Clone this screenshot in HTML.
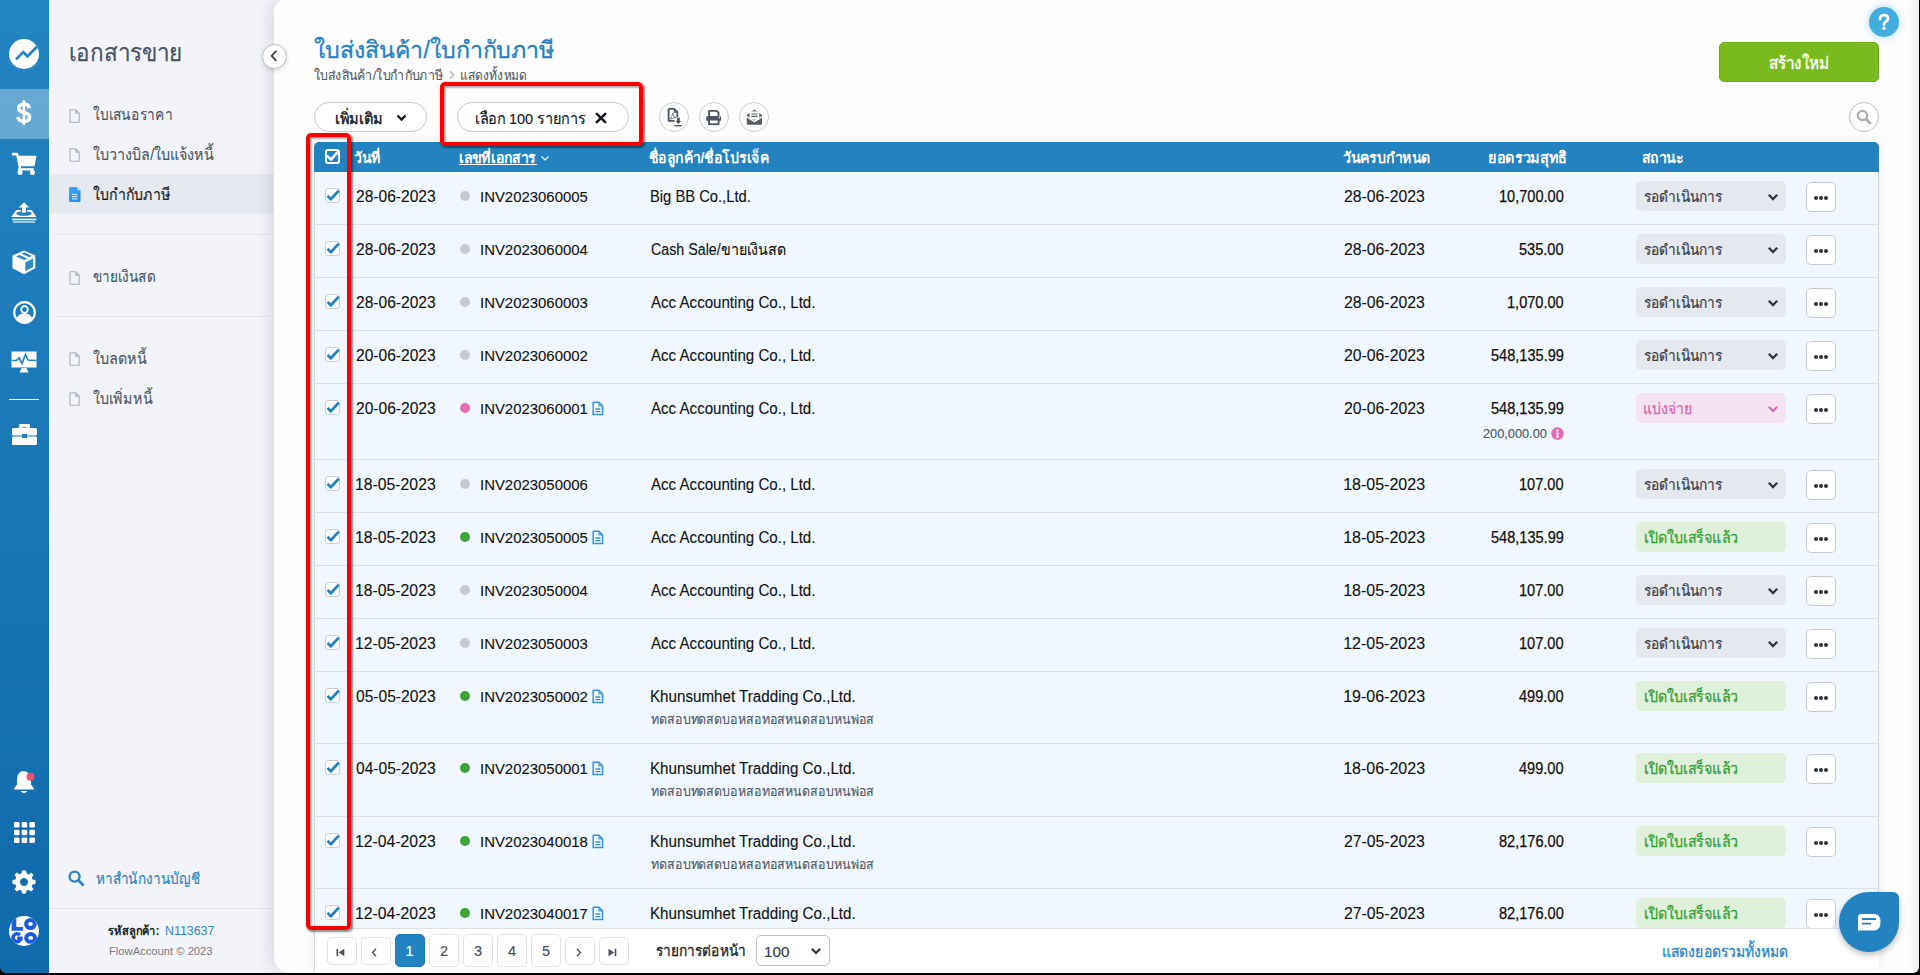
<!DOCTYPE html>
<html><head><meta charset="utf-8">
<style>
*{box-sizing:border-box;margin:0;padding:0}
html,body{width:1920px;height:975px;overflow:hidden;background:#000;font-family:"Liberation Sans",sans-serif;color:#1a1a1a}
.abs{position:absolute}
#rail{position:absolute;left:0;top:0;width:49px;height:973px;background:linear-gradient(#2384c2,#0f6aab);border-bottom-left-radius:6px}
#rail .act{position:absolute;left:0;top:89px;width:49px;height:50px;background:rgba(255,255,255,.32)}
#side{position:absolute;left:49px;top:0;width:240px;height:973px;background:#f3f4f9}
#main{position:absolute;left:274px;top:0;width:1645px;height:973px;background:#fdfdfe;border-radius:10px 0 6px 16px;box-shadow:-4px 0 14px rgba(80,90,130,.16)}
.t{position:absolute;white-space:nowrap;line-height:1}
.menu{font-size:14.2px;color:#4c5461}
.doc{position:absolute;width:11px;height:13px}
.row{position:absolute;left:314px;width:1565px;background:#f0f7fe;border-bottom:1px solid #dcdfe7;border-left:1px solid #d3d7e0;border-right:1px solid #cfd3dc}
.cb{position:absolute;left:325px;width:15px;height:15px;background:#fff;border:1px solid #c9ced8;border-radius:3px}
.cb svg{position:absolute;left:0;top:-1px}
.dt{font-size:15.5px;color:#111;letter-spacing:.1px}
.inv{font-size:14.8px;color:#111}
.dot{position:absolute;left:460px;width:10px;height:10px;border-radius:50%;background:#c7c9d1}
.cus{font-size:15px;color:#111}
.amt{font-size:14.8px;color:#111;text-align:right}
.st{position:absolute;left:1636px;width:150px;height:30px;border-radius:5px;background:#e5e9ef}
.st .t{left:8px;top:8px;font-size:14px;color:#3e4552}
.st svg{position:absolute;left:131px;top:11px}
.more{position:absolute;left:1806px;width:30px;height:30px;background:#fff;border:1px solid #c5c9d3;border-radius:5px}
.more i{position:absolute;top:13px;width:4.2px;height:4.2px;border-radius:50%;background:#2a303c}
.hd{font-size:14.2px;color:#fff;font-weight:bold}
.pg{position:absolute;width:30px;background:#fff;border:1px solid #dfe2e8;border-radius:5px;color:#4a5260;font-size:18px;text-align:center}
</style></head><body>

<!-- left rail -->
<div id="rail">
  <div class="act"></div>
  <svg class="abs" style="left:9px;top:39px" width="30" height="30" viewBox="0 0 30 30"><defs><clipPath id="c1"><circle cx="15" cy="15" r="15"/></clipPath></defs><circle cx="15" cy="15" r="15" fill="#fff"/><path clip-path="url(#c1)" d="M7.7 19.6 L14.3 13.1 L18.4 17.3 L30 5.8" stroke="#2384c2" stroke-width="2.7" fill="none" stroke-linecap="round" stroke-linejoin="miter"/></svg>
  <svg class="abs" style="left:16px;top:100px" width="16" height="25" viewBox="0 0 16 25"><path d="M13.3 8.2 C13 5.6 11 4.3 7.9 4.3 C4.6 4.3 2.6 6 2.6 8.3 C2.6 10.9 4.8 11.8 7.9 12.5 C11.3 13.3 13.6 14.4 13.6 17.2 C13.6 19.8 11.3 21.3 7.9 21.3 C4.4 21.3 2.3 19.6 2 16.9" fill="none" stroke="#fff" stroke-width="3.5"/><path d="M7.9 0.3 V24.7" stroke="#fff" stroke-width="2.6"/></svg>
  <svg class="abs" style="left:11px;top:152px" width="27" height="24" viewBox="0 0 27 24"><rect x="0.8" y="0.7" width="6.2" height="2.9" rx="1.3" fill="#fff"/><path d="M5 1.5 L7.3 1.5 L10.3 17.2 L7.9 17.2 Z" fill="#fff"/><path d="M6.8 3.7 H25.6 L23.4 14.2 H8.7 Z" fill="#fff"/><rect x="7" y="16.2" width="15.8" height="2.3" fill="#fff"/><circle cx="9" cy="20.5" r="2.5" fill="#fff"/><circle cx="21.4" cy="20.5" r="2.5" fill="#fff"/></svg>
  <svg class="abs" style="left:8px;top:196px" width="32" height="30" viewBox="0 0 32 30"><path d="M10.8 11.6 L16 6.3 L21.3 11.6 H18 V16.8 H14 V11.6 Z" fill="#fff"/><path d="M8.2 14.1 H13 V15.4 C10 15.8 8.3 16.6 8.3 17.5 C8.3 18.9 11.7 19.8 16 19.8 C20.3 19.8 23.7 18.9 23.7 17.5 C23.7 16.6 22 15.8 19 15.4 V14.1 H23.8 L28.3 21 H3.2 Z" fill="#fff"/><rect x="4" y="22.7" width="24.3" height="1.5" fill="#fff"/><rect x="5" y="25" width="22" height="1.9" fill="#fff" opacity=".6"/></svg>
  <svg class="abs" style="left:8px;top:246px" width="32" height="32" viewBox="0 0 32 32"><path d="M16 4.6 L27.3 9.5 V22.2 L16 28.2 L4.5 22.2 V9.5 Z" fill="#fff"/><path d="M17.3 16.4 L25.2 12.4 V20.9 L17.3 25.1 Z" fill="#2384c2" opacity=".95"/><path d="M8 10.4 L11.3 9 L19.4 12.6 L16.1 14 Z M13.5 7.5 L16.4 6.3 L24 10 L21.1 11.3 Z" fill="#2384c2" opacity=".95"/></svg>
  <svg class="abs" style="left:13px;top:301px" width="23" height="23" viewBox="0 0 23 23"><circle cx="11.5" cy="11.5" r="10.3" fill="none" stroke="#fff" stroke-width="2.2"/><circle cx="11.5" cy="8.5" r="3.3" fill="none" stroke="#fff" stroke-width="1.8"/><path d="M3.5 18 C5 13.5 8 12.5 11.5 12.5 C15 12.5 18 13.5 19.5 18 C17 20.5 14.5 21.5 11.5 21.5 C8.5 21.5 6 20.5 3.5 18Z" fill="#fff"/></svg>
  <svg class="abs" style="left:11px;top:351px" width="26" height="22" viewBox="0 0 26 22"><rect x="0.5" y="0.5" width="25" height="16" fill="#fff"/><path d="M1 9.5 H5.5 L8 7 L11 12.5 L14.5 3.5 L17 9 L25 9.5" stroke="#2384c2" stroke-width="1.7" fill="none"/><path d="M8.5 21.5 L10.5 17 H15.5 L17.5 21.5 Z" fill="#fff"/></svg>
  <div class="abs" style="left:9px;top:399px;width:30px;height:1px;background:#fff"></div>
  <svg class="abs" style="left:12px;top:424px" width="25" height="21" viewBox="0 0 25 21"><path d="M8 4 V1.5 Q8 0.5 9 0.5 H16 Q17 0.5 17 1.5 V4 M9.8 4 V2.3 H15.2 V4" fill="none" stroke="#fff" stroke-width="1.8"/><rect x="0" y="4" width="25" height="7.5" rx="1.5" fill="#fff"/><rect x="0" y="12.5" width="25" height="8.5" rx="1.5" fill="#fff"/><rect x="10" y="10" width="5" height="4" fill="#1f7bba"/></svg>

  <svg class="abs" style="left:13px;top:770px" width="23" height="25" viewBox="0 0 23 25"><path d="M10.5 1 C5.5 1.5 4 6 4 10 V14.5 L1 18.5 V19.5 H21 V18.5 L18 14.5 V10 C18 6 16 1.5 10.5 1 Z" fill="#fff"/><path d="M7.5 21 Q11 25 14.5 21 Z" fill="#fff"/><circle cx="17.5" cy="6.8" r="4" fill="#ef4f68"/></svg>
  <svg class="abs" style="left:14px;top:822px" width="21" height="21" viewBox="0 0 21 21"><g fill="#fff"><rect x="0" y="0" width="5.5" height="5.5" rx="1.2"/><rect x="7.7" y="0" width="5.5" height="5.5" rx="1.2"/><rect x="15.4" y="0" width="5.5" height="5.5" rx="1.2"/><rect x="0" y="7.7" width="5.5" height="5.5" rx="1.2"/><rect x="7.7" y="7.7" width="5.5" height="5.5" rx="1.2"/><rect x="15.4" y="7.7" width="5.5" height="5.5" rx="1.2"/><rect x="0" y="15.4" width="5.5" height="5.5" rx="1.2"/><rect x="7.7" y="15.4" width="5.5" height="5.5" rx="1.2"/><rect x="15.4" y="15.4" width="5.5" height="5.5" rx="1.2"/></g></svg>
  <svg class="abs" style="left:12px;top:870px" width="24" height="24" viewBox="0 0 24 24"><path fill="#fff" fill-rule="evenodd" d="M10 0.5 H14 L14.6 3.6 L16.6 4.5 L19.3 2.7 L21.6 5 L19.7 7.6 L20.5 9.6 L23.5 10.1 V14 L20.5 14.5 L19.7 16.5 L21.5 19.2 L19.2 21.5 L16.5 19.7 L14.5 20.5 L14 23.5 H10 L9.5 20.5 L7.5 19.7 L4.8 21.5 L2.5 19.2 L4.3 16.5 L3.5 14.5 L0.5 14 V10 L3.5 9.5 L4.3 7.5 L2.5 4.8 L4.8 2.5 L7.5 4.3 L9.5 3.5 Z M12 8 A4 4 0 1 0 12.01 8 Z"/></svg>
  <svg class="abs" style="left:9px;top:916px" width="30" height="30" viewBox="0 0 30 30"><defs><clipPath id="c2"><circle cx="15" cy="15" r="15"/></clipPath></defs><circle cx="15" cy="15" r="15" fill="#fff"/><g clip-path="url(#c2)" fill="#1a5ce0"><path d="M2.6 2.8 H7.3 V11 H14.1 V14.7 H2.6 Z"/><ellipse cx="21.45" cy="8.05" rx="4.35" ry="4.05" fill="none" stroke="#1a5ce0" stroke-width="4"/><ellipse cx="21.65" cy="21.9" rx="4.5" ry="3.9" fill="none" stroke="#1a5ce0" stroke-width="4"/><path d="M10.9 19.1 A3.9 4.0 0 1 0 11.8 22.6" fill="none" stroke="#1a5ce0" stroke-width="3.6"/><path d="M8.2 20.6 H13.7 V24 H8.2 Z"/></g></svg>
</div>

<div id="side"></div>
<div class="t" style="left:68.86px;top:41.10px;font-size:24px;color:#4a5462;font-weight:normal;-webkit-text-stroke:0.25px #4a5462;transform:scaleX(0.9361);transform-origin:0 0">เอกสารขาย</div>
<div class="abs" style="left:49px;top:174px;width:225px;height:40px;background:#e7e9f1"></div>
<svg class="abs" style="left:69px;top:109px" width="11" height="14" viewBox="0 0 11 14"><path d="M1 .8 H6.8 L10.2 4.2 V13.2 H1 Z M6.8 .8 V4.2 H10.2" fill="none" stroke="#a9b0bb" stroke-width="1.1" stroke-linejoin="round"/></svg>
<div class="t" style="left:93.30px;top:107.30px;font-size:16px;color:#4f5763;font-weight:normal;-webkit-text-stroke:0.1px #4f5763;transform:scaleX(0.8615);transform-origin:0 0">ใบเสนอราคา</div>
<svg class="abs" style="left:69px;top:148px" width="11" height="14" viewBox="0 0 11 14"><path d="M1 .8 H6.8 L10.2 4.2 V13.2 H1 Z M6.8 .8 V4.2 H10.2" fill="none" stroke="#a9b0bb" stroke-width="1.1" stroke-linejoin="round"/></svg>
<div class="t" style="left:93.30px;top:146.80px;font-size:16px;color:#4f5763;font-weight:normal;-webkit-text-stroke:0.1px #4f5763;transform:scaleX(0.8941);transform-origin:0 0">ใบวางบิล/ใบแจ้งหนี้</div>
<svg class="abs" style="left:69px;top:187px" width="12" height="15" viewBox="0 0 12 15"><defs><linearGradient id="gb" x1="0" y1="0" x2="1" y2="1"><stop offset="0" stop-color="#41a7f7"/><stop offset="1" stop-color="#1c86ee"/></linearGradient></defs><path d="M0 1 Q0 0 1 0 H8 L11.5 3.5 V14 Q11.5 15 10.5 15 H1 Q0 15 0 14 Z" fill="url(#gb)"/><path d="M8 0 V3.5 H11.5 Z" fill="#9fd0fb"/><path d="M3 7.3 H8.5 M3 9.6 H8.5 M3 11.9 H8.5" stroke="#dff0ff" stroke-width="1"/></svg>
<div class="t" style="left:93.30px;top:186.90px;font-size:16px;color:#1b1e24;font-weight:normal;-webkit-text-stroke:0.2px #1b1e24;transform:scaleX(0.8816);transform-origin:0 0">ใบกำกับภาษี</div>
<svg class="abs" style="left:69px;top:271px" width="11" height="14" viewBox="0 0 11 14"><path d="M1 .8 H6.8 L10.2 4.2 V13.2 H1 Z M6.8 .8 V4.2 H10.2" fill="none" stroke="#a9b0bb" stroke-width="1.1" stroke-linejoin="round"/></svg>
<div class="t" style="left:93.30px;top:269.30px;font-size:16px;color:#4f5763;font-weight:normal;-webkit-text-stroke:0.1px #4f5763;transform:scaleX(0.8507);transform-origin:0 0">ขายเงินสด</div>
<svg class="abs" style="left:69px;top:352px" width="11" height="14" viewBox="0 0 11 14"><path d="M1 .8 H6.8 L10.2 4.2 V13.2 H1 Z M6.8 .8 V4.2 H10.2" fill="none" stroke="#a9b0bb" stroke-width="1.1" stroke-linejoin="round"/></svg>
<div class="t" style="left:93.30px;top:350.80px;font-size:16px;color:#4f5763;font-weight:normal;-webkit-text-stroke:0.1px #4f5763;transform:scaleX(0.9017);transform-origin:0 0">ใบลดหนี้</div>
<svg class="abs" style="left:69px;top:392px" width="11" height="14" viewBox="0 0 11 14"><path d="M1 .8 H6.8 L10.2 4.2 V13.2 H1 Z M6.8 .8 V4.2 H10.2" fill="none" stroke="#a9b0bb" stroke-width="1.1" stroke-linejoin="round"/></svg>
<div class="t" style="left:93.30px;top:390.80px;font-size:16px;color:#4f5763;font-weight:normal;-webkit-text-stroke:0.1px #4f5763;transform:scaleX(0.8910);transform-origin:0 0">ใบเพิ่มหนี้</div>
<div class="abs" style="left:54px;top:234px;width:216px;height:1px;background:#e3e5eb"></div>
<div class="abs" style="left:54px;top:316px;width:216px;height:1px;background:#e3e5eb"></div>
<svg class="abs" style="left:68px;top:870px" width="17" height="17" viewBox="0 0 17 17"><circle cx="6.6" cy="6.6" r="5" fill="none" stroke="#2a86c6" stroke-width="2.3"/><path d="M10.3 10.3 L14.8 14.8" stroke="#2a86c6" stroke-width="2.8" stroke-linecap="round"/></svg>
<div class="t" style="left:96.10px;top:870.80px;font-size:15.5px;color:#2a86c6;font-weight:normal;-webkit-text-stroke:0.15px #2a86c6;transform:scaleX(0.8763);transform-origin:0 0">หาสำนักงานบัญชี</div>
<div class="abs" style="left:49px;top:908px;width:225px;height:1px;background:#e3e5eb"></div>
<div class="t" style="left:107.90px;top:925.00px;font-size:12.3px;color:#222;font-weight:bold;transform:scaleX(0.9000);transform-origin:0 0">รหัสลูกค้า:</div>
<div class="t" style="left:164.72px;top:925.00px;font-size:12px;color:#2a86c6;font-weight:normal;transform:scaleX(1.0309);transform-origin:0 0">N113637</div>
<div class="t" style="left:108.88px;top:946.00px;font-size:11px;color:#7b7b7b;font-weight:normal;transform:scaleX(1.0188);transform-origin:0 0">FlowAccount © 2023</div>
<div id="main"></div>
<div class="abs" style="left:261.5px;top:43.5px;width:25px;height:25px;border-radius:50%;background:#fff;border:1px solid #b9bec8;box-shadow:0 2px 4px rgba(0,0,0,.12)"></div>
<svg class="abs" style="left:268px;top:50px" width="12" height="12" viewBox="0 0 12 12"><path d="M7.8 1.3 L3.6 5.8 L7.8 10.3" fill="none" stroke="#38414f" stroke-width="1.8" stroke-linecap="round" stroke-linejoin="round"/></svg>
<div class="t" style="left:313.50px;top:39.10px;font-size:23.3px;color:#2581c4;font-weight:normal;-webkit-text-stroke:0.3px #2581c4;transform:scaleX(0.9946);transform-origin:0 0">ใบส่งสินค้า/ใบกำกับภาษี</div>
<div class="t" style="left:314.00px;top:69.00px;font-size:13.4px;color:#4f5866;font-weight:normal;-webkit-text-stroke:0.1px #4f5866;transform:scaleX(0.9177);transform-origin:0 0">ใบส่งสินค้า/ใบกำกับภาษี</div>
<svg class="abs" style="left:448px;top:69.5px" width="8" height="10" viewBox="0 0 8 10"><path d="M1.8 1.2 L5.6 5 L1.8 8.8" fill="none" stroke="#c6c8cc" stroke-width="2"/></svg>
<div class="t" style="left:460.01px;top:68.80px;font-size:13.4px;color:#4f5866;font-weight:normal;-webkit-text-stroke:0.1px #4f5866;transform:scaleX(0.8878);transform-origin:0 0">แสดงทั้งหมด</div>
<div class="abs" style="left:1869px;top:7px;width:30px;height:30px;border-radius:50%;background:#44ade0;box-shadow:0 0 8px rgba(68,173,224,.45)"></div>
<svg class="abs" style="left:1877px;top:13px" width="14" height="18" viewBox="0 0 14 18"><path d="M3 6 Q3 2.2 7 2.2 Q11 2.2 11 5.6 Q11 7.6 8.6 8.8 Q7 9.6 7 11.5" fill="none" stroke="#fff" stroke-width="2.8" stroke-linecap="round"/><circle cx="7" cy="15.3" r="1.7" fill="#fff"/></svg>
<div class="abs" style="left:1719px;top:42px;width:160px;height:40px;border-radius:5px;background:#79bb1f;border:1px solid #6dac18"></div>
<div class="t" style="left:1769.30px;top:56.00px;font-size:16.9px;color:#fff;font-weight:normal;-webkit-text-stroke:0.35px #fff;transform:scaleX(0.9047);transform-origin:0 0">สร้างใหม่</div>
<div class="abs" style="left:314px;top:102px;width:113px;height:30px;border-radius:15px;background:#fff;border:1px solid #c6cad3"></div>
<div class="t" style="left:334.95px;top:111.00px;font-size:15.3px;color:#15181d;font-weight:normal;-webkit-text-stroke:0.4px #15181d;transform:scaleX(0.9500);transform-origin:0 0">เพิ่มเติม</div>
<svg class="abs" style="left:396px;top:114px" width="11" height="8" viewBox="0 0 11 8"><path d="M1.5 1.5 L5.5 5.5 L9.5 1.5" fill="none" stroke="#15181d" stroke-width="2.4"/></svg>
<div class="abs" style="left:457px;top:102px;width:172px;height:30px;border-radius:15px;background:#fff;border:1px solid #c6cad3"></div>
<div class="t" style="left:475.36px;top:110.80px;font-size:15.5px;color:#15181d;font-weight:normal;-webkit-text-stroke:0.15px #15181d;transform:scaleX(0.9350);transform-origin:0 0">เลือก 100 รายการ</div>
<svg class="abs" style="left:595px;top:111.5px" width="12" height="12" viewBox="0 0 12 12"><path d="M1.8 1.8 L10.2 10.2 M10.2 1.8 L1.8 10.2" fill="none" stroke="#15181d" stroke-width="2.6" stroke-linecap="round"/></svg>
<div class="abs" style="left:644px;top:102px;width:1px;height:30px;background:#c8ccd4"></div>
<div class="abs" style="left:659px;top:102px;width:30px;height:30px;border-radius:50%;background:#fff;border:1px solid #c6cad3"></div>
<div class="abs" style="left:699px;top:102px;width:30px;height:30px;border-radius:50%;background:#fff;border:1px solid #c6cad3"></div>
<div class="abs" style="left:739px;top:102px;width:30px;height:30px;border-radius:50%;background:#fff;border:1px solid #c6cad3"></div>
<svg class="abs" style="left:666px;top:106px" width="18" height="22" viewBox="0 0 18 22"><path d="M11.3 11.3 V6 L8.1 2.9 H3.3 Q2.6 2.9 2.6 3.6 V14.2 Q2.6 14.9 3.3 14.9 H8.6" fill="none" stroke="#4b5361" stroke-width="1.8" stroke-linejoin="round"/><path d="M8.4 3.2 V6.3 H11.2" fill="none" stroke="#4b5361" stroke-width="1.1"/><path d="M3.6 13.3 C5.2 11.8 6.4 9.2 6.9 7.2 C7.3 9.4 8.3 11 10.2 11.7 C8.6 11.6 6.3 12.1 4.6 13.3" fill="none" stroke="#4b5361" stroke-width=".8"/><rect x="11.1" y="11.7" width="2.7" height="3.6" fill="#4b5361"/><path d="M9.6 15 H15.2 L12.4 17.9 Z" fill="#4b5361"/><rect x="8.4" y="19" width="7.4" height="1.3" fill="#4b5361"/></svg>
<svg class="abs" style="left:704px;top:108px" width="20" height="18" viewBox="0 0 20 18"><path d="M5.1 8 V2.8 H12.6 L14.5 4.7 V8" fill="#fff" stroke="#4b5361" stroke-width="1.8" stroke-linejoin="round"/><rect x="2.2" y="8" width="14.9" height="5.2" rx="1.6" fill="#4b5361"/><rect x="5.1" y="11.6" width="9.4" height="4.6" fill="#fff" stroke="#4b5361" stroke-width="1.8"/><circle cx="15.4" cy="9.4" r=".8" fill="#fff"/></svg>
<svg class="abs" style="left:745px;top:107px" width="19" height="19" viewBox="0 0 19 19"><path d="M1.8 8 L9.4 2.6 L17 8 V16.6 Q17 17.8 15.8 17.8 H3 Q1.8 17.8 1.8 16.6 Z" fill="#585d66"/><rect x="4.6" y="4.4" width="9.7" height="8.2" fill="#fff"/><path d="M6.4 7 H12.5 M6.4 9.4 H12.5" stroke="#585d66" stroke-width="1.2"/><path d="M1.8 9.6 L9.4 14.6 L17 9.6" fill="none" stroke="#fff" stroke-width="1.3"/></svg>
<div class="abs" style="left:1849px;top:102px;width:30px;height:30px;border-radius:50%;background:#fff;border:1px solid #c2c2c2"></div>
<svg class="abs" style="left:1856px;top:109px" width="16" height="16" viewBox="0 0 16 16"><circle cx="6.5" cy="6.5" r="4.7" fill="none" stroke="#adadad" stroke-width="2.2"/><path d="M10 10 L14 14" stroke="#adadad" stroke-width="2.8" stroke-linecap="round"/></svg>
<div class="abs" style="left:314px;top:142px;width:1565px;height:831px;box-shadow:0 0 10px rgba(0,0,0,.07)"></div>
<div class="abs" style="left:314px;top:142px;width:1565px;height:30px;background:#2283c0;border-radius:5px 5px 0 0"></div>
<div class="abs" style="left:325px;top:149px;width:15px;height:15px;border:2px solid #fff;border-radius:3px"></div>
<svg class="abs" style="left:326px;top:148px" width="16" height="15" viewBox="0 0 16 15"><path d="M1.8 8.3 L5 11.6 L12.3 3.3" fill="none" stroke="#fff" stroke-width="2.5" stroke-linecap="round" stroke-linejoin="round"/></svg>
<div class="t" style="left:353.90px;top:150.00px;font-size:15px;color:#fff;font-weight:bold;transform:scaleX(0.9393);transform-origin:0 0">วันที่</div>
<div class="t" style="left:458.66px;top:150.00px;font-size:15px;color:#fff;font-weight:bold;transform:scaleX(0.9370);transform-origin:0 0">เลขที่เอกสาร</div>
<div class="t" style="left:649.10px;top:150.00px;font-size:15px;color:#fff;font-weight:bold;transform:scaleX(0.9362);transform-origin:0 0">ชื่อลูกค้า/ชื่อโปรเจ็ค</div>
<div class="t" style="left:1342.70px;top:150.00px;font-size:15px;color:#fff;font-weight:bold;transform:scaleX(0.9424);transform-origin:0 0">วันครบกำหนด</div>
<div class="t" style="left:1488.24px;top:150.00px;font-size:15px;color:#fff;font-weight:bold;transform:scaleX(0.9625);transform-origin:0 0">ยอดรวมสุทธิ</div>
<div class="t" style="left:1641.70px;top:150.00px;font-size:15px;color:#fff;font-weight:bold;transform:scaleX(0.9372);transform-origin:0 0">สถานะ</div>
<div class="abs" style="left:459px;top:164px;width:78px;height:1.3px;background:#fff"></div>
<svg class="abs" style="left:540px;top:155px" width="10" height="7" viewBox="0 0 10 7"><path d="M1.5 1.5 L5 5 L8.5 1.5" fill="none" stroke="#fff" stroke-width="1.2"/></svg>
<div class="row" style="top:172px;height:53px"></div>
<div class="cb" style="top:188px"><svg width="16" height="16" viewBox="0 0 16 16"><path d="M1.6 7.9 L4.8 11.2 L12.8 2.6" fill="none" stroke="#2283c3" stroke-width="2.8" stroke-linejoin="round"/></svg></div>
<div class="t" style="left:355.75px;top:189.00px;font-size:16px;color:#111;font-weight:normal;-webkit-text-stroke:0.1px #111;transform:scaleX(0.9738);transform-origin:0 0">28-06-2023</div>
<div class="dot" style="top:190.7px;background:#c7c9d2"></div>
<div class="t" style="left:479.78px;top:189.00px;font-size:15.4px;color:#111;font-weight:normal;-webkit-text-stroke:0.1px #111;transform:scaleX(0.9695);transform-origin:0 0">INV2023060005</div>
<div class="t" style="left:649.88px;top:189.00px;font-size:16px;color:#111;font-weight:normal;-webkit-text-stroke:0.1px #111;transform:scaleX(0.9215);transform-origin:0 0">Big BB Co.,Ltd.</div>
<div class="t" style="left:1344.20px;top:189.00px;font-size:16px;color:#111;font-weight:normal;-webkit-text-stroke:0.1px #111;transform:scaleX(0.9866);transform-origin:0 0">28-06-2023</div>
<div class="t" style="left:1498.69px;top:189.00px;font-size:16px;color:#111;font-weight:normal;-webkit-text-stroke:0.25px #111;transform:scaleX(0.9100);transform-origin:0 0">10,700.00</div>
<div class="st" style="top:181px"></div>
<div class="t" style="left:1644.20px;top:188.80px;font-size:15.3px;color:#373d48;font-weight:normal;-webkit-text-stroke:0.22px #373d48;transform:scaleX(0.8954);transform-origin:0 0">รอดำเนินการ</div>
<svg class="abs" style="left:1766.5px;top:192.5px" width="12" height="9" viewBox="0 0 12 9"><path d="M1.8 1.8 L6 6 L10.2 1.8" fill="none" stroke="#2f3541" stroke-width="2.3"/></svg>
<div class="more" style="top:182px"><i style="left:6.7px"></i><i style="left:11.9px"></i><i style="left:17.1px"></i></div>
<div class="row" style="top:225px;height:53px"></div>
<div class="cb" style="top:241px"><svg width="16" height="16" viewBox="0 0 16 16"><path d="M1.6 7.9 L4.8 11.2 L12.8 2.6" fill="none" stroke="#2283c3" stroke-width="2.8" stroke-linejoin="round"/></svg></div>
<div class="t" style="left:355.75px;top:242.00px;font-size:16px;color:#111;font-weight:normal;-webkit-text-stroke:0.1px #111;transform:scaleX(0.9738);transform-origin:0 0">28-06-2023</div>
<div class="dot" style="top:243.7px;background:#c7c9d2"></div>
<div class="t" style="left:479.78px;top:242.00px;font-size:15.4px;color:#111;font-weight:normal;-webkit-text-stroke:0.1px #111;transform:scaleX(0.9695);transform-origin:0 0">INV2023060004</div>
<div class="t" style="left:650.80px;top:242.00px;font-size:16px;color:#111;font-weight:normal;-webkit-text-stroke:0.1px #111;transform:scaleX(0.8907);transform-origin:0 0">Cash Sale/ขายเงินสด</div>
<div class="t" style="left:1344.20px;top:242.00px;font-size:16px;color:#111;font-weight:normal;-webkit-text-stroke:0.1px #111;transform:scaleX(0.9866);transform-origin:0 0">28-06-2023</div>
<div class="t" style="left:1518.71px;top:242.00px;font-size:16px;color:#111;font-weight:normal;-webkit-text-stroke:0.25px #111;transform:scaleX(0.9100);transform-origin:0 0">535.00</div>
<div class="st" style="top:234px"></div>
<div class="t" style="left:1644.20px;top:241.80px;font-size:15.3px;color:#373d48;font-weight:normal;-webkit-text-stroke:0.22px #373d48;transform:scaleX(0.8954);transform-origin:0 0">รอดำเนินการ</div>
<svg class="abs" style="left:1766.5px;top:245.5px" width="12" height="9" viewBox="0 0 12 9"><path d="M1.8 1.8 L6 6 L10.2 1.8" fill="none" stroke="#2f3541" stroke-width="2.3"/></svg>
<div class="more" style="top:235px"><i style="left:6.7px"></i><i style="left:11.9px"></i><i style="left:17.1px"></i></div>
<div class="row" style="top:278px;height:53px"></div>
<div class="cb" style="top:294px"><svg width="16" height="16" viewBox="0 0 16 16"><path d="M1.6 7.9 L4.8 11.2 L12.8 2.6" fill="none" stroke="#2283c3" stroke-width="2.8" stroke-linejoin="round"/></svg></div>
<div class="t" style="left:355.75px;top:295.00px;font-size:16px;color:#111;font-weight:normal;-webkit-text-stroke:0.1px #111;transform:scaleX(0.9738);transform-origin:0 0">28-06-2023</div>
<div class="dot" style="top:296.7px;background:#c7c9d2"></div>
<div class="t" style="left:479.78px;top:295.00px;font-size:15.4px;color:#111;font-weight:normal;-webkit-text-stroke:0.1px #111;transform:scaleX(0.9695);transform-origin:0 0">INV2023060003</div>
<div class="t" style="left:650.80px;top:295.00px;font-size:16px;color:#111;font-weight:normal;-webkit-text-stroke:0.1px #111;transform:scaleX(0.9434);transform-origin:0 0">Acc Accounting Co., Ltd.</div>
<div class="t" style="left:1344.20px;top:295.00px;font-size:16px;color:#111;font-weight:normal;-webkit-text-stroke:0.1px #111;transform:scaleX(0.9866);transform-origin:0 0">28-06-2023</div>
<div class="t" style="left:1506.88px;top:295.00px;font-size:16px;color:#111;font-weight:normal;-webkit-text-stroke:0.25px #111;transform:scaleX(0.9100);transform-origin:0 0">1,070.00</div>
<div class="st" style="top:287px"></div>
<div class="t" style="left:1644.20px;top:294.80px;font-size:15.3px;color:#373d48;font-weight:normal;-webkit-text-stroke:0.22px #373d48;transform:scaleX(0.8954);transform-origin:0 0">รอดำเนินการ</div>
<svg class="abs" style="left:1766.5px;top:298.5px" width="12" height="9" viewBox="0 0 12 9"><path d="M1.8 1.8 L6 6 L10.2 1.8" fill="none" stroke="#2f3541" stroke-width="2.3"/></svg>
<div class="more" style="top:288px"><i style="left:6.7px"></i><i style="left:11.9px"></i><i style="left:17.1px"></i></div>
<div class="row" style="top:331px;height:53px"></div>
<div class="cb" style="top:347px"><svg width="16" height="16" viewBox="0 0 16 16"><path d="M1.6 7.9 L4.8 11.2 L12.8 2.6" fill="none" stroke="#2283c3" stroke-width="2.8" stroke-linejoin="round"/></svg></div>
<div class="t" style="left:355.75px;top:348.00px;font-size:16px;color:#111;font-weight:normal;-webkit-text-stroke:0.1px #111;transform:scaleX(0.9738);transform-origin:0 0">20-06-2023</div>
<div class="dot" style="top:349.7px;background:#c7c9d2"></div>
<div class="t" style="left:479.78px;top:348.00px;font-size:15.4px;color:#111;font-weight:normal;-webkit-text-stroke:0.1px #111;transform:scaleX(0.9695);transform-origin:0 0">INV2023060002</div>
<div class="t" style="left:650.80px;top:348.00px;font-size:16px;color:#111;font-weight:normal;-webkit-text-stroke:0.1px #111;transform:scaleX(0.9434);transform-origin:0 0">Acc Accounting Co., Ltd.</div>
<div class="t" style="left:1344.20px;top:348.00px;font-size:16px;color:#111;font-weight:normal;-webkit-text-stroke:0.1px #111;transform:scaleX(0.9866);transform-origin:0 0">20-06-2023</div>
<div class="t" style="left:1490.50px;top:348.00px;font-size:16px;color:#111;font-weight:normal;-webkit-text-stroke:0.25px #111;transform:scaleX(0.9100);transform-origin:0 0">548,135.99</div>
<div class="st" style="top:340px"></div>
<div class="t" style="left:1644.20px;top:347.80px;font-size:15.3px;color:#373d48;font-weight:normal;-webkit-text-stroke:0.22px #373d48;transform:scaleX(0.8954);transform-origin:0 0">รอดำเนินการ</div>
<svg class="abs" style="left:1766.5px;top:351.5px" width="12" height="9" viewBox="0 0 12 9"><path d="M1.8 1.8 L6 6 L10.2 1.8" fill="none" stroke="#2f3541" stroke-width="2.3"/></svg>
<div class="more" style="top:341px"><i style="left:6.7px"></i><i style="left:11.9px"></i><i style="left:17.1px"></i></div>
<div class="row" style="top:384px;height:76px"></div>
<div class="cb" style="top:400px"><svg width="16" height="16" viewBox="0 0 16 16"><path d="M1.6 7.9 L4.8 11.2 L12.8 2.6" fill="none" stroke="#2283c3" stroke-width="2.8" stroke-linejoin="round"/></svg></div>
<div class="t" style="left:355.75px;top:401.00px;font-size:16px;color:#111;font-weight:normal;-webkit-text-stroke:0.1px #111;transform:scaleX(0.9738);transform-origin:0 0">20-06-2023</div>
<div class="dot" style="top:402.7px;background:#e86bb1"></div>
<div class="t" style="left:479.78px;top:401.00px;font-size:15.4px;color:#111;font-weight:normal;-webkit-text-stroke:0.1px #111;transform:scaleX(0.9695);transform-origin:0 0">INV2023060001</div>
<svg class="abs" style="left:591.5px;top:401.4px" width="12" height="15" viewBox="0 0 12 15"><path d="M1.2 1.2 H7 L10.6 4.8 V13.6 H1.2 Z" fill="none" stroke="#3a93d5" stroke-width="1.5" stroke-linejoin="round"/><path d="M7 1.2 V4.8 H10.6" fill="none" stroke="#3a93d5" stroke-width="1.2"/><path d="M3.4 8 H8.4 M3.4 10.6 H8.4" stroke="#3a93d5" stroke-width="1.3"/></svg>
<div class="t" style="left:650.80px;top:401.00px;font-size:16px;color:#111;font-weight:normal;-webkit-text-stroke:0.1px #111;transform:scaleX(0.9434);transform-origin:0 0">Acc Accounting Co., Ltd.</div>
<div class="t" style="left:1344.20px;top:401.00px;font-size:16px;color:#111;font-weight:normal;-webkit-text-stroke:0.1px #111;transform:scaleX(0.9866);transform-origin:0 0">20-06-2023</div>
<div class="t" style="left:1490.50px;top:401.00px;font-size:16px;color:#111;font-weight:normal;-webkit-text-stroke:0.25px #111;transform:scaleX(0.9100);transform-origin:0 0">548,135.99</div>
<div class="t" style="left:1483.20px;top:427.70px;font-size:12.9px;color:#4a5565;font-weight:normal;-webkit-text-stroke:0.1px #4a5565;transform:scaleX(0.9891);transform-origin:0 0">200,000.00</div>
<svg class="abs" style="left:1551px;top:426.8px" width="13" height="13" viewBox="0 0 13 13"><circle cx="6.5" cy="6.5" r="6.3" fill="#e46cb4"/><circle cx="6.5" cy="3.6" r="1.1" fill="#fff"/><path d="M5.2 5.6 H7.3 V9.6 H8 V10.4 H5 V9.6 H5.8 V6.4 H5.2 Z" fill="#fff"/></svg>
<div class="st" style="top:393px;background:#f6e3f1"></div>
<div class="t" style="left:1643.48px;top:400.80px;font-size:15.3px;color:#e061b2;font-weight:normal;-webkit-text-stroke:0.25px #e061b2;transform:scaleX(0.9192);transform-origin:0 0">แบ่งจ่าย</div>
<svg class="abs" style="left:1766.5px;top:404.5px" width="12" height="9" viewBox="0 0 12 9"><path d="M1.8 1.8 L6 6 L10.2 1.8" fill="none" stroke="#e061b2" stroke-width="2"/></svg>
<div class="more" style="top:394px"><i style="left:6.7px"></i><i style="left:11.9px"></i><i style="left:17.1px"></i></div>
<div class="row" style="top:460px;height:53px"></div>
<div class="cb" style="top:476px"><svg width="16" height="16" viewBox="0 0 16 16"><path d="M1.6 7.9 L4.8 11.2 L12.8 2.6" fill="none" stroke="#2283c3" stroke-width="2.8" stroke-linejoin="round"/></svg></div>
<div class="t" style="left:354.76px;top:477.00px;font-size:16px;color:#111;font-weight:normal;-webkit-text-stroke:0.1px #111;transform:scaleX(0.9858);transform-origin:0 0">18-05-2023</div>
<div class="dot" style="top:478.7px;background:#c7c9d2"></div>
<div class="t" style="left:479.78px;top:477.00px;font-size:15.4px;color:#111;font-weight:normal;-webkit-text-stroke:0.1px #111;transform:scaleX(0.9695);transform-origin:0 0">INV2023050006</div>
<div class="t" style="left:650.80px;top:477.00px;font-size:16px;color:#111;font-weight:normal;-webkit-text-stroke:0.1px #111;transform:scaleX(0.9434);transform-origin:0 0">Acc Accounting Co., Ltd.</div>
<div class="t" style="left:1343.20px;top:477.00px;font-size:16px;color:#111;font-weight:normal;-webkit-text-stroke:0.1px #111">18-05-2023</div>
<div class="t" style="left:1518.71px;top:477.00px;font-size:16px;color:#111;font-weight:normal;-webkit-text-stroke:0.25px #111;transform:scaleX(0.9100);transform-origin:0 0">107.00</div>
<div class="st" style="top:469px"></div>
<div class="t" style="left:1644.20px;top:476.80px;font-size:15.3px;color:#373d48;font-weight:normal;-webkit-text-stroke:0.22px #373d48;transform:scaleX(0.8954);transform-origin:0 0">รอดำเนินการ</div>
<svg class="abs" style="left:1766.5px;top:480.5px" width="12" height="9" viewBox="0 0 12 9"><path d="M1.8 1.8 L6 6 L10.2 1.8" fill="none" stroke="#2f3541" stroke-width="2.3"/></svg>
<div class="more" style="top:470px"><i style="left:6.7px"></i><i style="left:11.9px"></i><i style="left:17.1px"></i></div>
<div class="row" style="top:513px;height:53px"></div>
<div class="cb" style="top:529px"><svg width="16" height="16" viewBox="0 0 16 16"><path d="M1.6 7.9 L4.8 11.2 L12.8 2.6" fill="none" stroke="#2283c3" stroke-width="2.8" stroke-linejoin="round"/></svg></div>
<div class="t" style="left:354.76px;top:530.00px;font-size:16px;color:#111;font-weight:normal;-webkit-text-stroke:0.1px #111;transform:scaleX(0.9858);transform-origin:0 0">18-05-2023</div>
<div class="dot" style="top:531.7px;background:#3fa43a"></div>
<div class="t" style="left:479.78px;top:530.00px;font-size:15.4px;color:#111;font-weight:normal;-webkit-text-stroke:0.1px #111;transform:scaleX(0.9695);transform-origin:0 0">INV2023050005</div>
<svg class="abs" style="left:591.5px;top:530.4px" width="12" height="15" viewBox="0 0 12 15"><path d="M1.2 1.2 H7 L10.6 4.8 V13.6 H1.2 Z" fill="none" stroke="#3a93d5" stroke-width="1.5" stroke-linejoin="round"/><path d="M7 1.2 V4.8 H10.6" fill="none" stroke="#3a93d5" stroke-width="1.2"/><path d="M3.4 8 H8.4 M3.4 10.6 H8.4" stroke="#3a93d5" stroke-width="1.3"/></svg>
<div class="t" style="left:650.80px;top:530.00px;font-size:16px;color:#111;font-weight:normal;-webkit-text-stroke:0.1px #111;transform:scaleX(0.9434);transform-origin:0 0">Acc Accounting Co., Ltd.</div>
<div class="t" style="left:1343.20px;top:530.00px;font-size:16px;color:#111;font-weight:normal;-webkit-text-stroke:0.1px #111">18-05-2023</div>
<div class="t" style="left:1490.50px;top:530.00px;font-size:16px;color:#111;font-weight:normal;-webkit-text-stroke:0.25px #111;transform:scaleX(0.9100);transform-origin:0 0">548,135.99</div>
<div class="st" style="top:522px;background:#dff0db"></div>
<div class="t" style="left:1643.82px;top:529.80px;font-size:15.3px;color:#36a036;font-weight:normal;-webkit-text-stroke:0.3px #36a036;transform:scaleX(0.9343);transform-origin:0 0">เปิดใบเสร็จแล้ว</div>
<div class="more" style="top:523px"><i style="left:6.7px"></i><i style="left:11.9px"></i><i style="left:17.1px"></i></div>
<div class="row" style="top:566px;height:53px"></div>
<div class="cb" style="top:582px"><svg width="16" height="16" viewBox="0 0 16 16"><path d="M1.6 7.9 L4.8 11.2 L12.8 2.6" fill="none" stroke="#2283c3" stroke-width="2.8" stroke-linejoin="round"/></svg></div>
<div class="t" style="left:354.76px;top:583.00px;font-size:16px;color:#111;font-weight:normal;-webkit-text-stroke:0.1px #111;transform:scaleX(0.9858);transform-origin:0 0">18-05-2023</div>
<div class="dot" style="top:584.7px;background:#c7c9d2"></div>
<div class="t" style="left:479.78px;top:583.00px;font-size:15.4px;color:#111;font-weight:normal;-webkit-text-stroke:0.1px #111;transform:scaleX(0.9695);transform-origin:0 0">INV2023050004</div>
<div class="t" style="left:650.80px;top:583.00px;font-size:16px;color:#111;font-weight:normal;-webkit-text-stroke:0.1px #111;transform:scaleX(0.9434);transform-origin:0 0">Acc Accounting Co., Ltd.</div>
<div class="t" style="left:1343.20px;top:583.00px;font-size:16px;color:#111;font-weight:normal;-webkit-text-stroke:0.1px #111">18-05-2023</div>
<div class="t" style="left:1518.71px;top:583.00px;font-size:16px;color:#111;font-weight:normal;-webkit-text-stroke:0.25px #111;transform:scaleX(0.9100);transform-origin:0 0">107.00</div>
<div class="st" style="top:575px"></div>
<div class="t" style="left:1644.20px;top:582.80px;font-size:15.3px;color:#373d48;font-weight:normal;-webkit-text-stroke:0.22px #373d48;transform:scaleX(0.8954);transform-origin:0 0">รอดำเนินการ</div>
<svg class="abs" style="left:1766.5px;top:586.5px" width="12" height="9" viewBox="0 0 12 9"><path d="M1.8 1.8 L6 6 L10.2 1.8" fill="none" stroke="#2f3541" stroke-width="2.3"/></svg>
<div class="more" style="top:576px"><i style="left:6.7px"></i><i style="left:11.9px"></i><i style="left:17.1px"></i></div>
<div class="row" style="top:619px;height:53px"></div>
<div class="cb" style="top:635px"><svg width="16" height="16" viewBox="0 0 16 16"><path d="M1.6 7.9 L4.8 11.2 L12.8 2.6" fill="none" stroke="#2283c3" stroke-width="2.8" stroke-linejoin="round"/></svg></div>
<div class="t" style="left:354.76px;top:636.00px;font-size:16px;color:#111;font-weight:normal;-webkit-text-stroke:0.1px #111;transform:scaleX(0.9858);transform-origin:0 0">12-05-2023</div>
<div class="dot" style="top:637.7px;background:#c7c9d2"></div>
<div class="t" style="left:479.78px;top:636.00px;font-size:15.4px;color:#111;font-weight:normal;-webkit-text-stroke:0.1px #111;transform:scaleX(0.9695);transform-origin:0 0">INV2023050003</div>
<div class="t" style="left:650.80px;top:636.00px;font-size:16px;color:#111;font-weight:normal;-webkit-text-stroke:0.1px #111;transform:scaleX(0.9434);transform-origin:0 0">Acc Accounting Co., Ltd.</div>
<div class="t" style="left:1343.20px;top:636.00px;font-size:16px;color:#111;font-weight:normal;-webkit-text-stroke:0.1px #111">12-05-2023</div>
<div class="t" style="left:1518.71px;top:636.00px;font-size:16px;color:#111;font-weight:normal;-webkit-text-stroke:0.25px #111;transform:scaleX(0.9100);transform-origin:0 0">107.00</div>
<div class="st" style="top:628px"></div>
<div class="t" style="left:1644.20px;top:635.80px;font-size:15.3px;color:#373d48;font-weight:normal;-webkit-text-stroke:0.22px #373d48;transform:scaleX(0.8954);transform-origin:0 0">รอดำเนินการ</div>
<svg class="abs" style="left:1766.5px;top:639.5px" width="12" height="9" viewBox="0 0 12 9"><path d="M1.8 1.8 L6 6 L10.2 1.8" fill="none" stroke="#2f3541" stroke-width="2.3"/></svg>
<div class="more" style="top:629px"><i style="left:6.7px"></i><i style="left:11.9px"></i><i style="left:17.1px"></i></div>
<div class="row" style="top:672px;height:72px"></div>
<div class="cb" style="top:688px"><svg width="16" height="16" viewBox="0 0 16 16"><path d="M1.6 7.9 L4.8 11.2 L12.8 2.6" fill="none" stroke="#2283c3" stroke-width="2.8" stroke-linejoin="round"/></svg></div>
<div class="t" style="left:355.75px;top:689.00px;font-size:16px;color:#111;font-weight:normal;-webkit-text-stroke:0.1px #111;transform:scaleX(0.9738);transform-origin:0 0">05-05-2023</div>
<div class="dot" style="top:690.7px;background:#3fa43a"></div>
<div class="t" style="left:479.78px;top:689.00px;font-size:15.4px;color:#111;font-weight:normal;-webkit-text-stroke:0.1px #111;transform:scaleX(0.9695);transform-origin:0 0">INV2023050002</div>
<svg class="abs" style="left:591.5px;top:689.4px" width="12" height="15" viewBox="0 0 12 15"><path d="M1.2 1.2 H7 L10.6 4.8 V13.6 H1.2 Z" fill="none" stroke="#3a93d5" stroke-width="1.5" stroke-linejoin="round"/><path d="M7 1.2 V4.8 H10.6" fill="none" stroke="#3a93d5" stroke-width="1.2"/><path d="M3.4 8 H8.4 M3.4 10.6 H8.4" stroke="#3a93d5" stroke-width="1.3"/></svg>
<div class="t" style="left:649.85px;top:689.00px;font-size:16px;color:#111;font-weight:normal;-webkit-text-stroke:0.1px #111;transform:scaleX(0.9479);transform-origin:0 0">Khunsumhet Tradding Co.,Ltd.</div>
<div class="t" style="left:650.90px;top:714.00px;font-size:12.6px;color:#4f5866;font-weight:normal;-webkit-text-stroke:0.1px #4f5866;transform:scaleX(0.9881);transform-origin:0 0">ทดสอบทดสดบอหสอทอสหนดสอบหนพ่อส</div>
<div class="t" style="left:1343.20px;top:689.00px;font-size:16px;color:#111;font-weight:normal;-webkit-text-stroke:0.1px #111">19-06-2023</div>
<div class="t" style="left:1518.71px;top:689.00px;font-size:16px;color:#111;font-weight:normal;-webkit-text-stroke:0.25px #111;transform:scaleX(0.9100);transform-origin:0 0">499.00</div>
<div class="st" style="top:681px;background:#dff0db"></div>
<div class="t" style="left:1643.82px;top:688.80px;font-size:15.3px;color:#36a036;font-weight:normal;-webkit-text-stroke:0.3px #36a036;transform:scaleX(0.9343);transform-origin:0 0">เปิดใบเสร็จแล้ว</div>
<div class="more" style="top:682px"><i style="left:6.7px"></i><i style="left:11.9px"></i><i style="left:17.1px"></i></div>
<div class="row" style="top:744px;height:73px"></div>
<div class="cb" style="top:760px"><svg width="16" height="16" viewBox="0 0 16 16"><path d="M1.6 7.9 L4.8 11.2 L12.8 2.6" fill="none" stroke="#2283c3" stroke-width="2.8" stroke-linejoin="round"/></svg></div>
<div class="t" style="left:355.75px;top:761.00px;font-size:16px;color:#111;font-weight:normal;-webkit-text-stroke:0.1px #111;transform:scaleX(0.9738);transform-origin:0 0">04-05-2023</div>
<div class="dot" style="top:762.7px;background:#3fa43a"></div>
<div class="t" style="left:479.78px;top:761.00px;font-size:15.4px;color:#111;font-weight:normal;-webkit-text-stroke:0.1px #111;transform:scaleX(0.9695);transform-origin:0 0">INV2023050001</div>
<svg class="abs" style="left:591.5px;top:761.4px" width="12" height="15" viewBox="0 0 12 15"><path d="M1.2 1.2 H7 L10.6 4.8 V13.6 H1.2 Z" fill="none" stroke="#3a93d5" stroke-width="1.5" stroke-linejoin="round"/><path d="M7 1.2 V4.8 H10.6" fill="none" stroke="#3a93d5" stroke-width="1.2"/><path d="M3.4 8 H8.4 M3.4 10.6 H8.4" stroke="#3a93d5" stroke-width="1.3"/></svg>
<div class="t" style="left:649.85px;top:761.00px;font-size:16px;color:#111;font-weight:normal;-webkit-text-stroke:0.1px #111;transform:scaleX(0.9479);transform-origin:0 0">Khunsumhet Tradding Co.,Ltd.</div>
<div class="t" style="left:650.90px;top:786.00px;font-size:12.6px;color:#4f5866;font-weight:normal;-webkit-text-stroke:0.1px #4f5866;transform:scaleX(0.9881);transform-origin:0 0">ทดสอบทดสดบอหสอทอสหนดสอบหนพ่อส</div>
<div class="t" style="left:1343.20px;top:761.00px;font-size:16px;color:#111;font-weight:normal;-webkit-text-stroke:0.1px #111">18-06-2023</div>
<div class="t" style="left:1518.71px;top:761.00px;font-size:16px;color:#111;font-weight:normal;-webkit-text-stroke:0.25px #111;transform:scaleX(0.9100);transform-origin:0 0">499.00</div>
<div class="st" style="top:753px;background:#dff0db"></div>
<div class="t" style="left:1643.82px;top:760.80px;font-size:15.3px;color:#36a036;font-weight:normal;-webkit-text-stroke:0.3px #36a036;transform:scaleX(0.9343);transform-origin:0 0">เปิดใบเสร็จแล้ว</div>
<div class="more" style="top:754px"><i style="left:6.7px"></i><i style="left:11.9px"></i><i style="left:17.1px"></i></div>
<div class="row" style="top:817px;height:72px"></div>
<div class="cb" style="top:833px"><svg width="16" height="16" viewBox="0 0 16 16"><path d="M1.6 7.9 L4.8 11.2 L12.8 2.6" fill="none" stroke="#2283c3" stroke-width="2.8" stroke-linejoin="round"/></svg></div>
<div class="t" style="left:354.76px;top:834.00px;font-size:16px;color:#111;font-weight:normal;-webkit-text-stroke:0.1px #111;transform:scaleX(0.9858);transform-origin:0 0">12-04-2023</div>
<div class="dot" style="top:835.7px;background:#3fa43a"></div>
<div class="t" style="left:479.78px;top:834.00px;font-size:15.4px;color:#111;font-weight:normal;-webkit-text-stroke:0.1px #111;transform:scaleX(0.9695);transform-origin:0 0">INV2023040018</div>
<svg class="abs" style="left:591.5px;top:834.4px" width="12" height="15" viewBox="0 0 12 15"><path d="M1.2 1.2 H7 L10.6 4.8 V13.6 H1.2 Z" fill="none" stroke="#3a93d5" stroke-width="1.5" stroke-linejoin="round"/><path d="M7 1.2 V4.8 H10.6" fill="none" stroke="#3a93d5" stroke-width="1.2"/><path d="M3.4 8 H8.4 M3.4 10.6 H8.4" stroke="#3a93d5" stroke-width="1.3"/></svg>
<div class="t" style="left:649.85px;top:834.00px;font-size:16px;color:#111;font-weight:normal;-webkit-text-stroke:0.1px #111;transform:scaleX(0.9479);transform-origin:0 0">Khunsumhet Tradding Co.,Ltd.</div>
<div class="t" style="left:650.90px;top:859.00px;font-size:12.6px;color:#4f5866;font-weight:normal;-webkit-text-stroke:0.1px #4f5866;transform:scaleX(0.9881);transform-origin:0 0">ทดสอบทดสดบอหสอทอสหนดสอบหนพ่อส</div>
<div class="t" style="left:1344.20px;top:834.00px;font-size:16px;color:#111;font-weight:normal;-webkit-text-stroke:0.1px #111;transform:scaleX(0.9866);transform-origin:0 0">27-05-2023</div>
<div class="t" style="left:1498.69px;top:834.00px;font-size:16px;color:#111;font-weight:normal;-webkit-text-stroke:0.25px #111;transform:scaleX(0.9100);transform-origin:0 0">82,176.00</div>
<div class="st" style="top:826px;background:#dff0db"></div>
<div class="t" style="left:1643.82px;top:833.80px;font-size:15.3px;color:#36a036;font-weight:normal;-webkit-text-stroke:0.3px #36a036;transform:scaleX(0.9343);transform-origin:0 0">เปิดใบเสร็จแล้ว</div>
<div class="more" style="top:827px"><i style="left:6.7px"></i><i style="left:11.9px"></i><i style="left:17.1px"></i></div>
<div class="row" style="top:889px;height:40px"></div>
<div class="cb" style="top:905px"><svg width="16" height="16" viewBox="0 0 16 16"><path d="M1.6 7.9 L4.8 11.2 L12.8 2.6" fill="none" stroke="#2283c3" stroke-width="2.8" stroke-linejoin="round"/></svg></div>
<div class="t" style="left:354.76px;top:906.00px;font-size:16px;color:#111;font-weight:normal;-webkit-text-stroke:0.1px #111;transform:scaleX(0.9858);transform-origin:0 0">12-04-2023</div>
<div class="dot" style="top:907.7px;background:#3fa43a"></div>
<div class="t" style="left:479.78px;top:906.00px;font-size:15.4px;color:#111;font-weight:normal;-webkit-text-stroke:0.1px #111;transform:scaleX(0.9695);transform-origin:0 0">INV2023040017</div>
<svg class="abs" style="left:591.5px;top:906.4px" width="12" height="15" viewBox="0 0 12 15"><path d="M1.2 1.2 H7 L10.6 4.8 V13.6 H1.2 Z" fill="none" stroke="#3a93d5" stroke-width="1.5" stroke-linejoin="round"/><path d="M7 1.2 V4.8 H10.6" fill="none" stroke="#3a93d5" stroke-width="1.2"/><path d="M3.4 8 H8.4 M3.4 10.6 H8.4" stroke="#3a93d5" stroke-width="1.3"/></svg>
<div class="t" style="left:649.85px;top:906.00px;font-size:16px;color:#111;font-weight:normal;-webkit-text-stroke:0.1px #111;transform:scaleX(0.9479);transform-origin:0 0">Khunsumhet Tradding Co.,Ltd.</div>
<div class="t" style="left:650.90px;top:931.00px;font-size:12.6px;color:#4f5866;font-weight:normal;-webkit-text-stroke:0.1px #4f5866;transform:scaleX(0.9881);transform-origin:0 0">ทดสอบทดสดบอหสอทอสหนดสอบหนพ่อส</div>
<div class="t" style="left:1344.20px;top:906.00px;font-size:16px;color:#111;font-weight:normal;-webkit-text-stroke:0.1px #111;transform:scaleX(0.9866);transform-origin:0 0">27-05-2023</div>
<div class="t" style="left:1498.69px;top:906.00px;font-size:16px;color:#111;font-weight:normal;-webkit-text-stroke:0.25px #111;transform:scaleX(0.9100);transform-origin:0 0">82,176.00</div>
<div class="st" style="top:898px;background:#dff0db"></div>
<div class="t" style="left:1643.82px;top:905.80px;font-size:15.3px;color:#36a036;font-weight:normal;-webkit-text-stroke:0.3px #36a036;transform:scaleX(0.9343);transform-origin:0 0">เปิดใบเสร็จแล้ว</div>
<div class="more" style="top:899px"><i style="left:6.7px"></i><i style="left:11.9px"></i><i style="left:17.1px"></i></div>
<div class="abs" style="left:314px;top:928px;width:1565px;height:45px;background:#fff;border-left:1px solid #d3d7e0;border-top:1px solid #dcdfe7"></div>
<div class="pg" style="left:327px;top:937px;height:28px"></div>
<div class="pg" style="left:361px;top:937px;height:28px"></div>
<div class="pg" style="left:565px;top:937px;height:28px"></div>
<div class="pg" style="left:599px;top:937px;height:28px"></div>
<div class="pg" style="left:395px;top:934px;height:33px;background:#2283c3;border-color:#1f7ab8"></div>
<div class="pg" style="left:429px;top:934px;height:33px"></div>
<div class="pg" style="left:463px;top:934px;height:33px"></div>
<div class="pg" style="left:497px;top:934px;height:33px"></div>
<div class="pg" style="left:531px;top:934px;height:33px"></div>
<div class="t" style="left:405.50px;top:943.80px;font-size:14.5px;color:#fff;font-weight:normal;-webkit-text-stroke:0.15px #fff">1</div>
<div class="t" style="left:440.00px;top:943.80px;font-size:14.5px;color:#474f5c;font-weight:normal;-webkit-text-stroke:0.15px #474f5c">2</div>
<div class="t" style="left:474.00px;top:943.80px;font-size:14.5px;color:#474f5c;font-weight:normal;-webkit-text-stroke:0.15px #474f5c">3</div>
<div class="t" style="left:508.00px;top:943.80px;font-size:14.5px;color:#474f5c;font-weight:normal;-webkit-text-stroke:0.15px #474f5c">4</div>
<div class="t" style="left:542.00px;top:943.80px;font-size:14.5px;color:#474f5c;font-weight:normal;-webkit-text-stroke:0.15px #474f5c">5</div>
<svg class="abs" style="left:336px;top:948px" width="9" height="9" viewBox="0 0 9 9"><path d="M1.3 .8 V8.2" stroke="#4a5260" stroke-width="1.6"/><path d="M8.3 .8 V8.2 L2.5 4.5 Z" fill="#4a5260"/></svg>
<svg class="abs" style="left:371px;top:948px" width="7" height="9" viewBox="0 0 7 9"><path d="M5 .8 L1.6 4.5 L5 8.2" fill="none" stroke="#4a5260" stroke-width="1.4"/></svg>
<svg class="abs" style="left:575px;top:948px" width="7" height="9" viewBox="0 0 7 9"><path d="M2 .8 L5.4 4.5 L2 8.2" fill="none" stroke="#4a5260" stroke-width="1.4"/></svg>
<svg class="abs" style="left:608px;top:948px" width="9" height="9" viewBox="0 0 9 9"><path d="M7.5 .8 V8.2" stroke="#4a5260" stroke-width="1.6"/><path d="M.5 .8 V8.2 L6.3 4.5 Z" fill="#4a5260"/></svg>
<div class="t" style="left:656.00px;top:944.10px;font-size:14.8px;color:#1a1d22;font-weight:normal;-webkit-text-stroke:0.3px #1a1d22;transform:scaleX(0.9216);transform-origin:0 0">รายการต่อหน้า</div>
<div class="abs" style="left:756px;top:935px;width:74px;height:31px;border-radius:5px;background:#fff;border:1px solid #bcc1cc"></div>
<div class="t" style="left:763.69px;top:943.90px;font-size:15px;color:#3a4250;font-weight:normal;-webkit-text-stroke:0.2px #3a4250;transform:scaleX(1.0125);transform-origin:0 0">100</div>
<svg class="abs" style="left:809.5px;top:947px" width="12" height="9" viewBox="0 0 12 9"><path d="M1.8 1.8 L6 6 L10.2 1.8" fill="none" stroke="#2f3541" stroke-width="2.2"/></svg>
<div class="t" style="left:1661.60px;top:943.90px;font-size:15.5px;color:#2a86c6;font-weight:normal;-webkit-text-stroke:0.3px #2a86c6;transform:scaleX(0.9022);transform-origin:0 0">แสดงยอดรวมทั้งหมด</div>
<div class="abs" style="left:1839px;top:892px;width:60px;height:60px;border-radius:50% 6px 50% 50%;background:#2283c0;box-shadow:0 3px 6px rgba(0,0,0,.25)"></div>
<svg class="abs" style="left:1857px;top:913px" width="24" height="18" viewBox="0 0 24 18"><path d="M1 4 Q1 1 4 1 H17 Q23.5 1 23.5 9 Q23.5 17.5 17 17.5 H1 Z" fill="#fff"/><path d="M5 6 H19 M5 10.6 H14" stroke="#2283c0" stroke-width="1.8"/></svg>
<div class="abs" style="left:306px;top:133px;width:45px;height:797px;border:4px solid #fa0000;border-radius:5px;box-shadow:1.5px 1.5px 2px rgba(0,0,0,.45), inset 1.5px 1.5px 2px rgba(0,0,0,.4)"></div>
<div class="abs" style="left:440px;top:82px;width:203px;height:64px;border:4px solid #fa0000;border-radius:5px;box-shadow:1.5px 1.5px 2px rgba(0,0,0,.45), inset 1.5px 1.5px 2px rgba(0,0,0,.4)"></div>
<div class="abs" style="left:1908px;top:0;width:11px;height:973px;background:linear-gradient(90deg,rgba(0,0,0,0),rgba(0,0,0,.05))"></div>
<div class="abs" style="left:1919px;top:0;width:1px;height:975px;background:#000"></div>
<div class="abs" style="left:0;top:973px;width:1920px;height:2px;background:#000"></div>
</body></html>
